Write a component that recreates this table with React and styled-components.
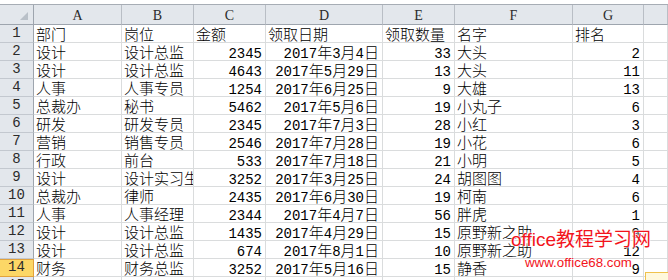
import React from "react";
import styled, { createGlobalStyle } from "styled-components";

const GlobalStyle = createGlobalStyle`
  html, body { margin: 0; padding: 0; background: #fff; }
  body { overflow: hidden; }
`;

const Sheet = styled.div`
  position: relative;
  width: 668px;
  height: 280px;
  overflow: hidden;
  background: #fff;
`;

const TopStrip = styled.div`
  box-sizing: border-box;
  height: 5px;
  border-bottom: 1px solid #a7adb5;
  background: #fff;
`;

const Grid = styled.div`
  display: grid;
  grid-template-columns: 34px 88px 72px 72px 117px 72px 118px 71px 1fr;
  grid-template-rows: 20px repeat(15, 18px);
`;

const Corner = styled.div`
  position: relative;
  box-sizing: border-box;
  background: #e3e7ec;
  border-right: 1px solid #9ea5ae;
  border-bottom: 1px solid #9ea5ae;
  &::after {
    content: "";
    position: absolute;
    right: 5px;
    bottom: 4px;
    width: 0;
    height: 0;
    border-left: 8px solid transparent;
    border-bottom: 8px solid #b9c0c8;
  }
`;

const ColHead = styled.div`
  box-sizing: border-box;
  background: #e3e7ec;
  border-right: 1px solid #b9bec5;
  border-bottom: 1px solid #9ea5ae;
  text-align: center;
  font: 14px/20px "Liberation Serif", serif;
  padding-top: 1px;
  color: #2b2b2b;
`;

const RowHead = styled.div`
  box-sizing: border-box;
  background: ${p => (p.$active ? "#fcd766" : "#e3e7ec")};
  border-right: 1px solid ${p => (p.$active ? "#e2a23c" : "#9ea5ae")};
  border-bottom: 1px solid ${p => (p.$active ? "#e2a23c" : "#c3c8cf")};
  box-shadow: ${p => (p.$active ? "inset 0 1px 0 #e2a23c" : "none")};
  text-align: center;
  font: 14px/17px "Liberation Mono", monospace;
  color: #2b2b2b;
`;

const Cell = styled.div`
  box-sizing: border-box;
  border-right: 1px solid #dadcdd;
  border-bottom: 1px solid #dadcdd;
  padding: ${p => (p.$num ? "0 3px 0 2px" : "0 2px 0 2px")};
  text-align: ${p => (p.$num ? "right" : "left")};
  font: 300 15px/17px "Noto Sans CJK SC", sans-serif;
  color: #000;
  white-space: nowrap;
  overflow-x: ${p => (p.$clip ? "clip" : "visible")};
  overflow-y: visible;
`;

const Latin = styled.span`
  font-family: "Liberation Mono", monospace;
  font-weight: 400;
  font-size: 14px;
`;

const Watermark = styled.div`
  position: absolute;
  left: 511px;
  top: 229px;
  font: 19px/22px "Liberation Sans", "Noto Sans CJK SC", sans-serif;
  color: #f2141c;
  text-shadow: 0 0 2px #fff, 0 0 2px #fff, 0 0 1px #fff;
  white-space: nowrap;
`;

const WatermarkUrl = styled.div`
  position: absolute;
  left: 525px;
  top: 255px;
  font: 13.3px/15px "Liberation Sans", sans-serif;
  color: #f2141c;
  text-shadow: 0 0 2px #fff, 0 0 1px #fff;
  white-space: nowrap;
`;

const PasteTag = styled.div`
  position: absolute;
  left: 645px;
  top: 272px;
  width: 24px;
  height: 12px;
  box-sizing: border-box;
  border: 1px solid #f0c24c;
  background: #fff8dc;
`;

function Mixed({ text }) {
  const parts = String(text).split(/([\x20-\x7e]+)/).filter(Boolean);
  return parts.map((p, i) =>
    /^[\x20-\x7e]+$/.test(p) ? <Latin key={i}>{p}</Latin> : <React.Fragment key={i}>{p}</React.Fragment>
  );
}

const cols = ["A", "B", "C", "D", "E", "F", "G", ""];

const header = ["部门", "岗位", "金额", "领取日期", "领取数量", "名字", "排名", ""];

const data = [
  ["设计", "设计总监", 2345, "2017年3月4日", 33, "大头", 2],
  ["设计", "设计总监", 4643, "2017年5月29日", 13, "大头", 11],
  ["人事", "人事专员", 1254, "2017年6月25日", 9, "大雄", 13],
  ["总裁办", "秘书", 5462, "2017年5月6日", 19, "小丸子", 6],
  ["研发", "研发专员", 2345, "2017年7月3日", 28, "小红", 3],
  ["营销", "销售专员", 2546, "2017年7月28日", 19, "小花", 6],
  ["行政", "前台", 533, "2017年7月18日", 21, "小明", 5],
  ["设计", "设计实习生", 3252, "2017年3月25日", 24, "胡图图", 4],
  ["总裁办", "律师", 2435, "2017年6月30日", 19, "柯南", 6],
  ["人事", "人事经理", 2344, "2017年4月7日", 56, "胖虎", 1],
  ["设计", "设计总监", 1435, "2017年4月29日", 15, "原野新之助", 9],
  ["设计", "设计总监", 674, "2017年8月1日", 10, "原野新之助", 12],
  ["财务", "财务总监", 3252, "2017年5月16日", 15, "静香", 9],
];

const numericCols = [2, 3, 4, 6];

export default function App() {
  return (
    <Sheet>
      <GlobalStyle />
      <TopStrip />
      <Grid>
        <Corner />
        {cols.map((c, i) => (
          <ColHead key={"h" + i}>{c}</ColHead>
        ))}

        <RowHead>1</RowHead>
        {header.map((h, i) => (
          <Cell key={"r1" + i}>
            <Mixed text={h} />
          </Cell>
        ))}

        {data.map((row, r) => (
          <React.Fragment key={"row" + r}>
            <RowHead $active={r + 2 === 14}>{r + 2}</RowHead>
            {row.map((v, c) => (
              <Cell
                key={c}
                $num={numericCols.includes(c)}
                $clip={c === 1 && String(v).length > 4}
              >
                <Mixed text={v} />
              </Cell>
            ))}
            <Cell />
          </React.Fragment>
        ))}

        <RowHead>15</RowHead>
        {cols.map((c, i) => (
          <Cell key={"r15" + i} />
        ))}
      </Grid>
      <Watermark>office教程学习网</Watermark>
      <WatermarkUrl>www.office68.com</WatermarkUrl>
      <PasteTag />
    </Sheet>
  );
}
